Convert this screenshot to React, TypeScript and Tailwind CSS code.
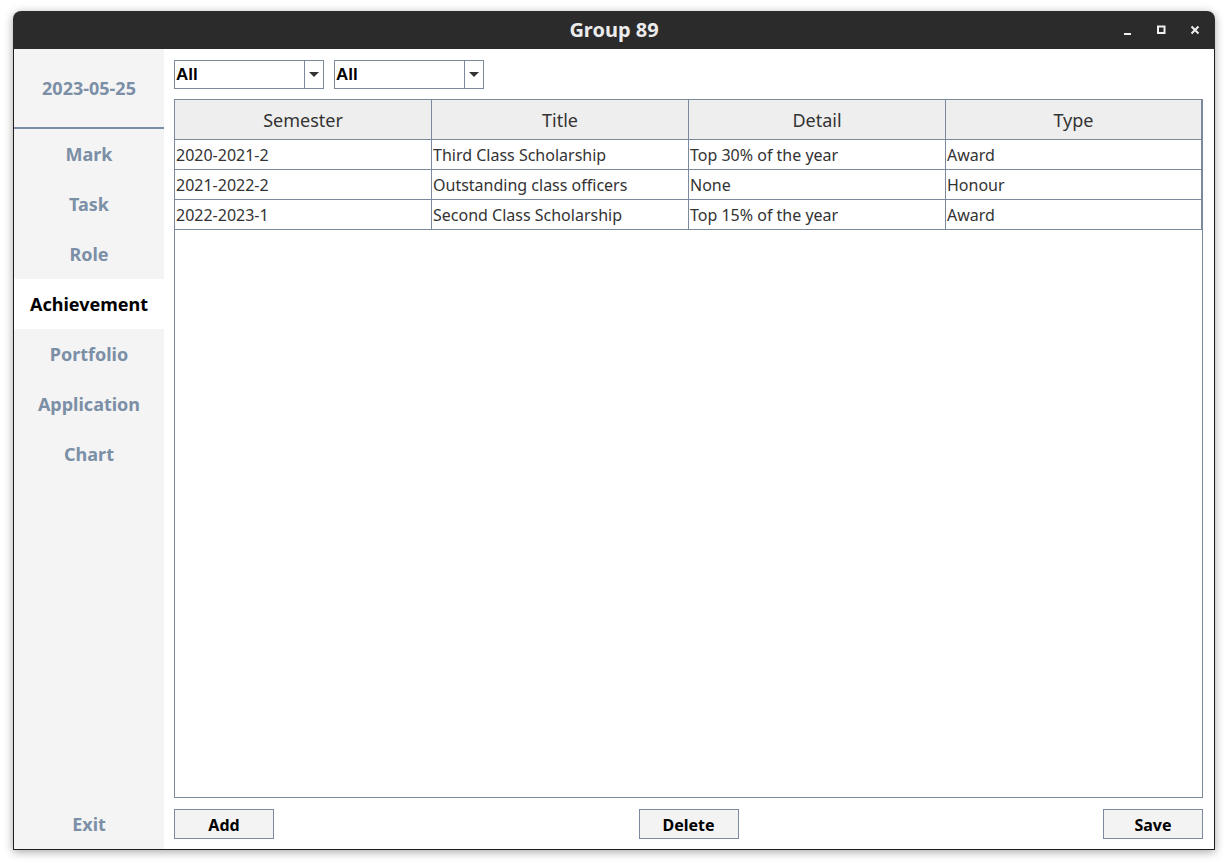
import React from "react";

const rows = [
  ["2020-2021-2", "Third Class Scholarship", "Top 30% of the year", "Award"],
  ["2021-2022-2", "Outstanding class officers", "None", "Honour"],
  ["2022-2023-1", "Second Class Scholarship", "Top 15% of the year", "Award"],
];

const nav = ["Mark", "Task", "Role", "Achievement", "Portfolio", "Application", "Chart"];

function Combo() {
  return (
    <div className="flex h-[29px] w-[150px] border border-[#7a8a9c] bg-white">
      <div className="flex flex-1 items-center pl-[1px] text-[17px] font-bold text-black [font-family:'Liberation_Sans',Arial,sans-serif]">
        All
      </div>
      <div className="flex w-[19px] items-center justify-center border-l border-[#7a8a9c]">
        <svg width="10" height="6" viewBox="0 0 10 6">
          <path d="M0 0 L10 0 L5 5 Z" fill="#333" />
        </svg>
      </div>
    </div>
  );
}

function Btn({ label }: { label: string }) {
  return (
    <div className="flex h-[30px] w-[100px] items-center justify-center border border-[#7a8a9c] bg-[#f3f3f3] pt-[2px] text-[16px] font-bold text-black">
      {label}
    </div>
  );
}

export default function App() {
  return (
    <div className="h-[866px] w-[1228px] bg-white pl-[13px] pt-[11px] [font-family:'Noto_Sans',sans-serif]">
      <div className="flex h-[839px] w-[1202px] flex-col overflow-hidden rounded-t-[8px] shadow-[0_2px_10px_rgba(0,0,0,0.35)]">
        <div className="relative flex h-[38px] shrink-0 items-center justify-center bg-[#2b2b2b] text-[20px] font-bold text-[#ececec]">
          Group 89
          <div className="absolute right-[14px] top-0 flex h-full items-center gap-[22px]">
            <svg width="12" height="12" viewBox="0 0 12 12">
              <rect x="3" y="9" width="7" height="2" fill="#f0f0f0" />
            </svg>
            <svg width="12" height="12" viewBox="0 0 12 12">
              <rect x="3" y="2.5" width="6.5" height="6.5" fill="none" stroke="#f0f0f0" strokeWidth="2" />
            </svg>
            <svg width="12" height="12" viewBox="0 0 12 12">
              <path d="M2.5 2.5 L9.5 9.5 M9.5 2.5 L2.5 9.5" stroke="#f0f0f0" strokeWidth="2" />
            </svg>
          </div>
        </div>
        <div className="flex flex-1 border-x border-b border-[#1e1e1e]">
          <div className="flex w-[150px] flex-col bg-[#f4f4f4]">
            <div className="flex h-[78px] items-center justify-center pt-[1px] text-[18px] font-bold text-[#7b8fa6]">
              2023-05-25
            </div>
            <div className="h-[2px] bg-[#7b8ea3]" />
            {nav.map((n) => (
              <div
                key={n}
                className={
                  n === "Achievement"
                    ? "flex h-[50px] items-center justify-center bg-white text-[18px] font-bold text-black"
                    : "flex h-[50px] items-center justify-center text-[18px] font-bold text-[#7b8fa6]"
                }
              >
                {n}
              </div>
            ))}
            <div className="flex-1" />
            <div className="flex h-[50px] items-center justify-center text-[18px] font-bold text-[#7b8fa6]">
              Exit
            </div>
          </div>
          <div className="flex flex-1 flex-col bg-white pb-[10px] pl-[10px] pr-[11px] pt-[11px]">
            <div className="flex gap-[10px]">
              <Combo />
              <Combo />
            </div>
            <div className="mt-[10px] flex-1 border border-[#7a8a9c]">
              <div className="flex h-[40px] border-b border-[#7a8a9c] bg-[#eeeeee]">
                {["Semester", "Title", "Detail", "Type"].map((h, i) => (
                  <div
                    key={h}
                    className={
                      i < 3
                        ? "flex w-[257px] items-center justify-center border-r border-[#7a8a9c] pt-[1px] text-[18px] text-[#333]"
                        : "flex flex-1 items-center justify-center border-r border-[#7a8a9c] pt-[1px] text-[18px] text-[#333]"
                    }
                  >
                    {h}
                  </div>
                ))}
              </div>
              {rows.map((r) => (
                <div key={r[0]} className="flex h-[30px] border-b border-[#7a8a9c]">
                  {r.map((c, i) => (
                    <div
                      key={i}
                      className={
                        i < 3
                          ? "flex w-[257px] items-center border-r border-[#7a8a9c] pl-[1px] text-[16px] text-[#333]"
                          : "flex flex-1 items-center border-r border-[#7a8a9c] pl-[1px] text-[16px] text-[#333]"
                      }
                    >
                      {c}
                    </div>
                  ))}
                </div>
              ))}
            </div>
            <div className="mt-[11px] flex justify-between">
              <Btn label="Add" />
              <Btn label="Delete" />
              <Btn label="Save" />
            </div>
          </div>
        </div>
      </div>
    </div>
  );
}
